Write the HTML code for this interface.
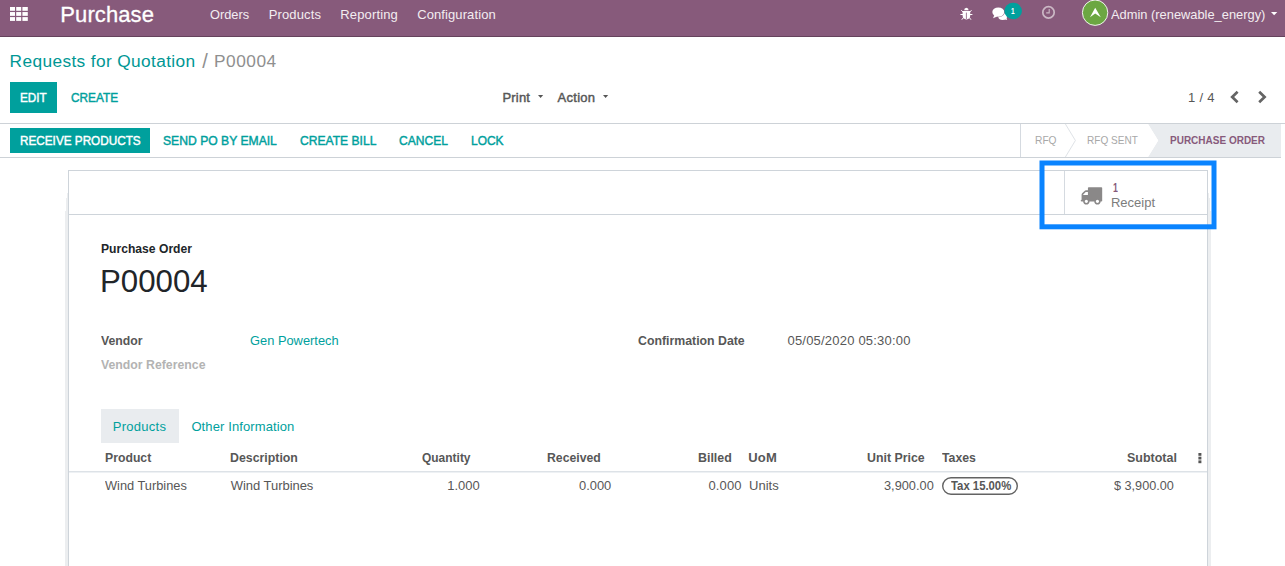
<!DOCTYPE html>
<html lang="en"><head><meta charset="utf-8"><title>P00004 - Odoo</title>
<style>
html,body{margin:0;padding:0}
body{width:1285px;height:566px;overflow:hidden;position:relative;background:#fff;font-family:"Liberation Sans",sans-serif}
.t{position:absolute;white-space:pre;margin:0;padding:0}
.b{position:absolute;box-sizing:border-box}
svg{position:absolute;overflow:visible}

</style></head><body>
<!-- navbar -->
<div class="b" style="left:0;top:0;width:1285px;height:37px;background:#875A7B;border-bottom:1px solid #65435c"></div>
<!-- apps grid icon -->
<svg style="left:10px;top:7px" width="18" height="14" viewBox="0 0 18 14"><g fill="#fff"><rect x="0" y="0" width="5" height="3.8"/><rect x="6.2" y="0" width="5" height="3.8"/><rect x="12.4" y="0" width="5.4" height="3.8"/><rect x="0" y="5.05" width="5" height="3.8"/><rect x="6.2" y="5.05" width="5" height="3.8"/><rect x="12.4" y="5.05" width="5.4" height="3.8"/><rect x="0" y="10.1" width="5" height="3.8"/><rect x="6.2" y="10.1" width="5" height="3.8"/><rect x="12.4" y="10.1" width="5.4" height="3.8"/></g></svg>
<!-- bug icon -->
<svg style="left:960px;top:7px" width="14" height="14" viewBox="0 0 14 14">
<g stroke="#fff" stroke-width="1" fill="none"><path d="M0.4 7.5h12M1.3 3.2l2.2 2.3M11.5 3.2l-2.2 2.3M1.8 12.7l1.7-2.2M11 12.7l-1.7-2.2"/></g>
<path d="M4.2 3.2 A2.2 2.5 0 0 1 8.6 3.2 Z" fill="#fff"/>
<path d="M2.6 4.1 H10.2 V8.6 A3.8 3.8 0 0 1 2.6 8.6 Z" fill="#fff"/>
<path d="M6.4 5.6v6.4" stroke="#875A7B" stroke-width="0.8"/>
</svg>
<!-- chat icon -->
<svg style="left:992px;top:7px" width="16" height="14" viewBox="0 0 16 14">
<ellipse cx="10.6" cy="9.5" rx="4.4" ry="3.4" fill="#fff"/><path d="M15.2 12.9 L11.6 12 L14.2 10.4 Z" fill="#fff"/>
<ellipse cx="6.3" cy="5.1" rx="6.4" ry="5.1" fill="#875A7B"/>
<ellipse cx="6.3" cy="5.1" rx="6" ry="4.65" fill="#fff"/><path d="M1 11.2 L2.4 8 L5.2 9.4 Z" fill="#fff"/>
</svg>
<!-- badge -->
<svg style="left:1004px;top:2px" width="19" height="18" viewBox="0 0 19 18"><ellipse cx="9.15" cy="9" rx="8.8" ry="8.3" fill="#00A09D"/></svg>
<!-- clock -->
<svg style="left:1041px;top:5px" width="16" height="16" viewBox="0 0 16 16"><g fill="none" stroke="#cbb8c5">
<circle cx="7.5" cy="7.4" r="5.7" stroke-width="1.7"/><path d="M8.2 4v3.9h-3" stroke-width="1.1"/></g></svg>
<!-- avatar -->
<svg style="left:1081px;top:-1px" width="28" height="28" viewBox="0 0 28 28">
<circle cx="14.1" cy="13.7" r="12.7" fill="#6ca742" stroke="#fff" stroke-width="0.9"/>
<path d="M14.2 8.8 L19.8 18.2 L14.2 14.6 L9 18.2 Z" fill="#fff"/></svg>
<!-- user caret -->
<svg style="left:1271px;top:11.7px" width="7" height="4" viewBox="0 0 7 4"><path d="M0 0h6.3L3.15 3.3z" fill="#fff"/></svg>

<!-- control panel border -->
<div class="b" style="left:0;top:123px;width:1285px;height:1px;background:#cdd2d7"></div>
<!-- EDIT button -->
<div class="b" style="left:10px;top:82px;width:47px;height:31px;background:#00A09D"></div>
<!-- carets -->
<svg style="left:538px;top:95.2px" width="6" height="4" viewBox="0 0 6 4"><path d="M0 0h5.2L2.6 3z" fill="#555"/></svg>
<svg style="left:602.6px;top:95.2px" width="6" height="4" viewBox="0 0 6 4"><path d="M0 0h5.2L2.6 3z" fill="#555"/></svg>
<!-- pager chevrons -->
<svg style="left:1229px;top:90px" width="12" height="14" viewBox="0 0 12 14"><path d="M8.6 1.8 L3.2 7 L8.6 12.2" fill="none" stroke="#646464" stroke-width="2.7"/></svg>
<svg style="left:1256px;top:90px" width="12" height="14" viewBox="0 0 12 14"><path d="M3.2 1.8 L8.6 7 L3.2 12.2" fill="none" stroke="#646464" stroke-width="2.7"/></svg>

<!-- statusbar -->
<div class="b" style="left:0;top:157px;width:1281px;height:1px;background:#cdd2d7"></div>
<div class="b" style="left:10px;top:128px;width:140px;height:25px;background:#00A09D"></div>
<div class="b" style="left:1020px;top:124px;width:1px;height:33px;background:#d5dae0"></div>
<svg style="left:1060px;top:124px" width="221" height="33" viewBox="0 0 221 33">
<path d="M88 0 H221 V33 H88 L98.2 16.5 Z" fill="#e9ecef"/>
<path d="M5.4 0 L15.4 16.5 L5.4 33" fill="none" stroke="#dfe3e7" stroke-width="1"/>
<path d="M88 0 L98.2 16.5 L88 33" fill="#fff" stroke="none"/>
</svg>

<!-- sheet -->
<div class="b" style="left:65px;top:211px;width:1px;height:400px;background:#eceef0"></div>
<div class="b" style="left:66px;top:198px;width:1px;height:400px;background:#eceef0"></div>
<div class="b" style="left:67px;top:193px;width:1px;height:400px;background:#eceef0"></div>
<div class="b" style="left:1208px;top:193px;width:1px;height:400px;background:#eceef0"></div>
<div class="b" style="left:1209px;top:198px;width:1px;height:400px;background:#eceef0"></div>
<div class="b" style="left:1210px;top:211px;width:1px;height:400px;background:#eceef0"></div>
<div class="b" style="left:68px;top:170px;width:1140px;height:420px;border:1px solid #ced4da;background:#fff"></div>
<div class="b" style="left:69px;top:214px;width:1138px;height:1px;background:#ced4da"></div>
<!-- receipt stat button -->
<div class="b" style="left:1064px;top:171px;width:1px;height:43px;background:#d5dae0"></div>
<svg style="left:1080.1px;top:183.9px" width="22.2" height="22.2" viewBox="0 0 1792 1792"><path fill-rule="evenodd" fill="#8a8888" d="M640 1408q0 52-38 90t-90 38-90-38-38-90 38-90 90-38 90 38 38 90zm-384-512h384v-256h-158q-13 0-22 9l-195 195q-9 9-9 22v30zm1280 512q0 52-38 90t-90 38-90-38-38-90 38-90 90-38 90 38 38 90zm256-1088v1024q0 15-4 26.500t-13.500 18.500-16.500 11.500-23.500 6-22.500 2-25.500 0-22.500-.5q0 106-75 181t-181 75-181-75-75-181h-384q0 106-75 181t-181 75-181-75-75-181h-64q-3 0-22.500.500t-25.500 0-22.500-2-23.500-6-16.500-11.500-13.500-18.500-4-26.500q0-26 19-45t45-19v-320q0-8-.5-35t0-38 2.500-34.500 6.500-37 14-30.500 22.500-30l198-198q19-19 50.500-32t58.500-13h160v-192q0-26 19-45t45-19h1024q26 0 45 19t19 45z"/></svg>
<!-- blue highlight rectangle -->
<svg style="left:1035px;top:156px" width="190" height="80" viewBox="0 0 190 80"><rect x="7" y="7" width="172" height="63.8" fill="none" stroke="#0a84ff" stroke-width="5"/></svg>

<!-- tab -->
<div class="b" style="left:101px;top:409px;width:78px;height:34px;background:#e9ecef"></div>
<!-- table header border -->
<div class="b" style="left:69px;top:471px;width:1138px;height:1px;background:#dde2e7"></div><div class="b" style="left:69px;top:472px;width:1138px;height:1px;background:#eef1f4"></div>
<!-- kebab -->
<svg style="left:1198px;top:453px" width="4" height="11" viewBox="0 0 4 11"><g fill="#555"><rect x="0.4" y="0" width="3" height="2.8"/><rect x="0.4" y="3.7" width="3" height="2.8"/><rect x="0.4" y="7.4" width="3" height="2.8"/></g></svg>
<!-- tax pill -->
<svg style="left:940px;top:475px" width="80" height="22" viewBox="0 0 80 22"><rect x="2.7" y="2.7" width="74.6" height="16.6" rx="8.3" fill="none" stroke="#636363" stroke-width="1.4"/></svg>

<span class="t" style="left:60.27px;top:-1px;font-size:22px;line-height:31px;font-weight:400;color:#fff;letter-spacing:0.105px;-webkit-text-stroke:0.3px #fff;">Purchase</span>
<span class="t" style="left:209.82px;top:4px;font-size:13px;line-height:21px;font-weight:400;color:#f3edf1;letter-spacing:0.000px;transform:scaleX(0.9843);transform-origin:0 0;">Orders</span>
<span class="t" style="left:268.67px;top:4px;font-size:13px;line-height:21px;font-weight:400;color:#f3edf1;letter-spacing:0.155px;">Products</span>
<span class="t" style="left:340.26px;top:4px;font-size:13px;line-height:21px;font-weight:400;color:#f3edf1;letter-spacing:0.154px;">Reporting</span>
<span class="t" style="left:417.21px;top:4px;font-size:13px;line-height:21px;font-weight:400;color:#f3edf1;letter-spacing:0.096px;">Configuration</span>
<span class="t" style="left:1110.58px;top:4px;font-size:13px;line-height:21px;font-weight:400;color:#f3edf1;letter-spacing:0.000px;transform:scaleX(0.9890);transform-origin:0 0;">Admin (renewable_energy)</span>
<span class="t" style="left:1011.18px;top:2px;font-size:9.5px;line-height:17px;font-weight:700;color:#fff;letter-spacing:0.000px;transform:scaleX(0.6838);transform-origin:0 0;">1</span>
<span class="t" style="left:9.61px;top:48px;font-size:17.3px;line-height:26px;font-weight:400;color:#009794;letter-spacing:0.372px;">Requests for Quotation</span>
<span class="t" style="left:202.17px;top:47px;font-size:20px;line-height:28px;font-weight:400;color:#8f8f8f;letter-spacing:0.000px;">/</span>
<span class="t" style="left:214.01px;top:48px;font-size:17.3px;line-height:26px;font-weight:400;color:#8f8f8f;letter-spacing:0.506px;">P00004</span>
<span class="t" style="left:20.22px;top:87px;font-size:13px;line-height:21px;font-weight:400;color:#fff;letter-spacing:0.000px;transform:scaleX(0.9022);transform-origin:0 0;-webkit-text-stroke:0.45px #fff;">EDIT</span>
<span class="t" style="left:71.04px;top:87px;font-size:13px;line-height:21px;font-weight:400;color:#00A09D;letter-spacing:0.000px;transform:scaleX(0.9087);transform-origin:0 0;-webkit-text-stroke:0.45px #00A09D;">CREATE</span>
<span class="t" style="left:502.46px;top:87px;font-size:13px;line-height:21px;font-weight:400;color:#575757;letter-spacing:0.196px;-webkit-text-stroke:0.45px #575757;">Print</span>
<span class="t" style="left:557.61px;top:87px;font-size:13px;line-height:21px;font-weight:400;color:#575757;letter-spacing:0.271px;-webkit-text-stroke:0.45px #575757;">Action</span>
<span class="t" style="left:1187.91px;top:87px;font-size:13px;line-height:21px;font-weight:400;color:#575757;letter-spacing:0.336px;">1 / 4</span>
<span class="t" style="left:20.23px;top:130px;font-size:13px;line-height:21px;font-weight:400;color:#fff;letter-spacing:0.000px;transform:scaleX(0.9030);transform-origin:0 0;-webkit-text-stroke:0.45px #fff;">RECEIVE PRODUCTS</span>
<span class="t" style="left:162.67px;top:130px;font-size:13px;line-height:21px;font-weight:400;color:#00A09D;letter-spacing:0.000px;transform:scaleX(0.9345);transform-origin:0 0;-webkit-text-stroke:0.45px #00A09D;">SEND PO BY EMAIL</span>
<span class="t" style="left:299.62px;top:130px;font-size:13px;line-height:21px;font-weight:400;color:#00A09D;letter-spacing:0.000px;transform:scaleX(0.9298);transform-origin:0 0;-webkit-text-stroke:0.45px #00A09D;">CREATE BILL</span>
<span class="t" style="left:398.62px;top:130px;font-size:13px;line-height:21px;font-weight:400;color:#00A09D;letter-spacing:0.000px;transform:scaleX(0.9266);transform-origin:0 0;-webkit-text-stroke:0.45px #00A09D;">CANCEL</span>
<span class="t" style="left:471.40px;top:130px;font-size:13px;line-height:21px;font-weight:400;color:#00A09D;letter-spacing:0.000px;transform:scaleX(0.9199);transform-origin:0 0;-webkit-text-stroke:0.45px #00A09D;">LOCK</span>
<span class="t" style="left:1035.27px;top:131px;font-size:11px;line-height:18px;font-weight:400;color:#a8a8a8;letter-spacing:0.000px;transform:scaleX(0.9291);transform-origin:0 0;">RFQ</span>
<span class="t" style="left:1086.67px;top:131px;font-size:11px;line-height:18px;font-weight:400;color:#a8a8a8;letter-spacing:0.000px;transform:scaleX(0.9129);transform-origin:0 0;">RFQ SENT</span>
<span class="t" style="left:1169.87px;top:131px;font-size:11px;line-height:18px;font-weight:700;color:#875A7B;letter-spacing:0.000px;transform:scaleX(0.9090);transform-origin:0 0;">PURCHASE ORDER</span>
<span class="t" style="left:1112.55px;top:178px;font-size:12.5px;line-height:20px;font-weight:700;color:#875A7B;letter-spacing:0.000px;transform:scaleX(0.7029);transform-origin:0 0;">1</span>
<span class="t" style="left:1110.97px;top:192px;font-size:13px;line-height:21px;font-weight:400;color:#7c7c7c;letter-spacing:0.005px;">Receipt</span>
<span class="t" style="left:101.17px;top:238px;font-size:13px;line-height:21px;font-weight:700;color:#212529;letter-spacing:0.000px;transform:scaleX(0.9327);transform-origin:0 0;">Purchase Order</span>
<span class="t" style="left:99.50px;top:261px;font-size:31.4px;line-height:41px;font-weight:400;color:#212529;letter-spacing:0.000px;transform:scaleX(0.9951);transform-origin:0 0;">P00004</span>
<span class="t" style="left:101.28px;top:330px;font-size:13px;line-height:21px;font-weight:700;color:#575757;letter-spacing:0.000px;transform:scaleX(0.9441);transform-origin:0 0;">Vendor</span>
<span class="t" style="left:250.37px;top:330px;font-size:13px;line-height:21px;font-weight:400;color:#00A09D;letter-spacing:0.000px;transform:scaleX(0.9895);transform-origin:0 0;">Gen Powertech</span>
<span class="t" style="left:101.28px;top:354px;font-size:13px;line-height:21px;font-weight:700;color:#b3b3b3;letter-spacing:0.000px;transform:scaleX(0.9451);transform-origin:0 0;">Vendor Reference</span>
<span class="t" style="left:637.54px;top:330px;font-size:13px;line-height:21px;font-weight:700;color:#575757;letter-spacing:0.000px;transform:scaleX(0.9471);transform-origin:0 0;">Confirmation Date</span>
<span class="t" style="left:787.48px;top:330px;font-size:13px;line-height:21px;font-weight:400;color:#575757;letter-spacing:0.203px;">05/05/2020 05:30:00</span>
<span class="t" style="left:112.74px;top:416px;font-size:13px;line-height:21px;font-weight:400;color:#00A09D;letter-spacing:0.264px;">Products</span>
<span class="t" style="left:191.39px;top:416px;font-size:13px;line-height:21px;font-weight:400;color:#00A09D;letter-spacing:0.110px;">Other Information</span>
<span class="t" style="left:105.47px;top:447px;font-size:13px;line-height:21px;font-weight:700;color:#575757;letter-spacing:0.000px;transform:scaleX(0.9415);transform-origin:0 0;">Product</span>
<span class="t" style="left:230.27px;top:447px;font-size:13px;line-height:21px;font-weight:700;color:#575757;letter-spacing:0.000px;transform:scaleX(0.9492);transform-origin:0 0;">Description</span>
<span class="t" style="left:421.55px;top:447px;font-size:13px;line-height:21px;font-weight:700;color:#575757;letter-spacing:0.000px;transform:scaleX(0.9204);transform-origin:0 0;">Quantity</span>
<span class="t" style="left:547.27px;top:447px;font-size:13px;line-height:21px;font-weight:700;color:#575757;letter-spacing:0.000px;transform:scaleX(0.9420);transform-origin:0 0;">Received</span>
<span class="t" style="left:698.27px;top:447px;font-size:13px;line-height:21px;font-weight:700;color:#575757;letter-spacing:0.000px;transform:scaleX(0.9553);transform-origin:0 0;">Billed</span>
<span class="t" style="left:748.27px;top:447px;font-size:13px;line-height:21px;font-weight:700;color:#575757;letter-spacing:0.218px;">UoM</span>
<span class="t" style="left:867.31px;top:447px;font-size:13px;line-height:21px;font-weight:700;color:#575757;letter-spacing:0.000px;transform:scaleX(0.9503);transform-origin:0 0;">Unit Price</span>
<span class="t" style="left:941.90px;top:447px;font-size:13px;line-height:21px;font-weight:700;color:#575757;letter-spacing:0.000px;transform:scaleX(0.9458);transform-origin:0 0;">Taxes</span>
<span class="t" style="left:1126.92px;top:447px;font-size:13px;line-height:21px;font-weight:700;color:#575757;letter-spacing:0.000px;transform:scaleX(0.9589);transform-origin:0 0;">Subtotal</span>
<span class="t" style="left:105.01px;top:475px;font-size:13px;line-height:21px;font-weight:400;color:#575757;letter-spacing:0.000px;transform:scaleX(0.9851);transform-origin:0 0;">Wind Turbines</span>
<span class="t" style="left:230.81px;top:475px;font-size:13px;line-height:21px;font-weight:400;color:#575757;letter-spacing:-0.045px;">Wind Turbines</span>
<span class="t" style="left:447.14px;top:475px;font-size:13px;line-height:21px;font-weight:400;color:#575757;letter-spacing:0.028px;">1.000</span>
<span class="t" style="left:579.49px;top:475px;font-size:13px;line-height:21px;font-weight:400;color:#575757;letter-spacing:0.000px;transform:scaleX(0.9929);transform-origin:0 0;">0.000</span>
<span class="t" style="left:708.49px;top:475px;font-size:13px;line-height:21px;font-weight:400;color:#575757;letter-spacing:0.109px;">0.000</span>
<span class="t" style="left:748.94px;top:475px;font-size:13px;line-height:21px;font-weight:400;color:#575757;letter-spacing:0.053px;">Units</span>
<span class="t" style="left:883.52px;top:475px;font-size:13px;line-height:21px;font-weight:400;color:#575757;letter-spacing:0.000px;transform:scaleX(0.9828);transform-origin:0 0;">3,900.00</span>
<span class="t" style="left:951.30px;top:476px;font-size:12px;line-height:20px;font-weight:700;color:#575757;letter-spacing:0.000px;transform:scaleX(0.9440);transform-origin:0 0;">Tax 15.00%</span>
<span class="t" style="left:1114.00px;top:475px;font-size:13px;line-height:21px;font-weight:400;color:#575757;letter-spacing:0.000px;transform:scaleX(0.9740);transform-origin:0 0;">$ 3,900.00</span>
</body></html>
